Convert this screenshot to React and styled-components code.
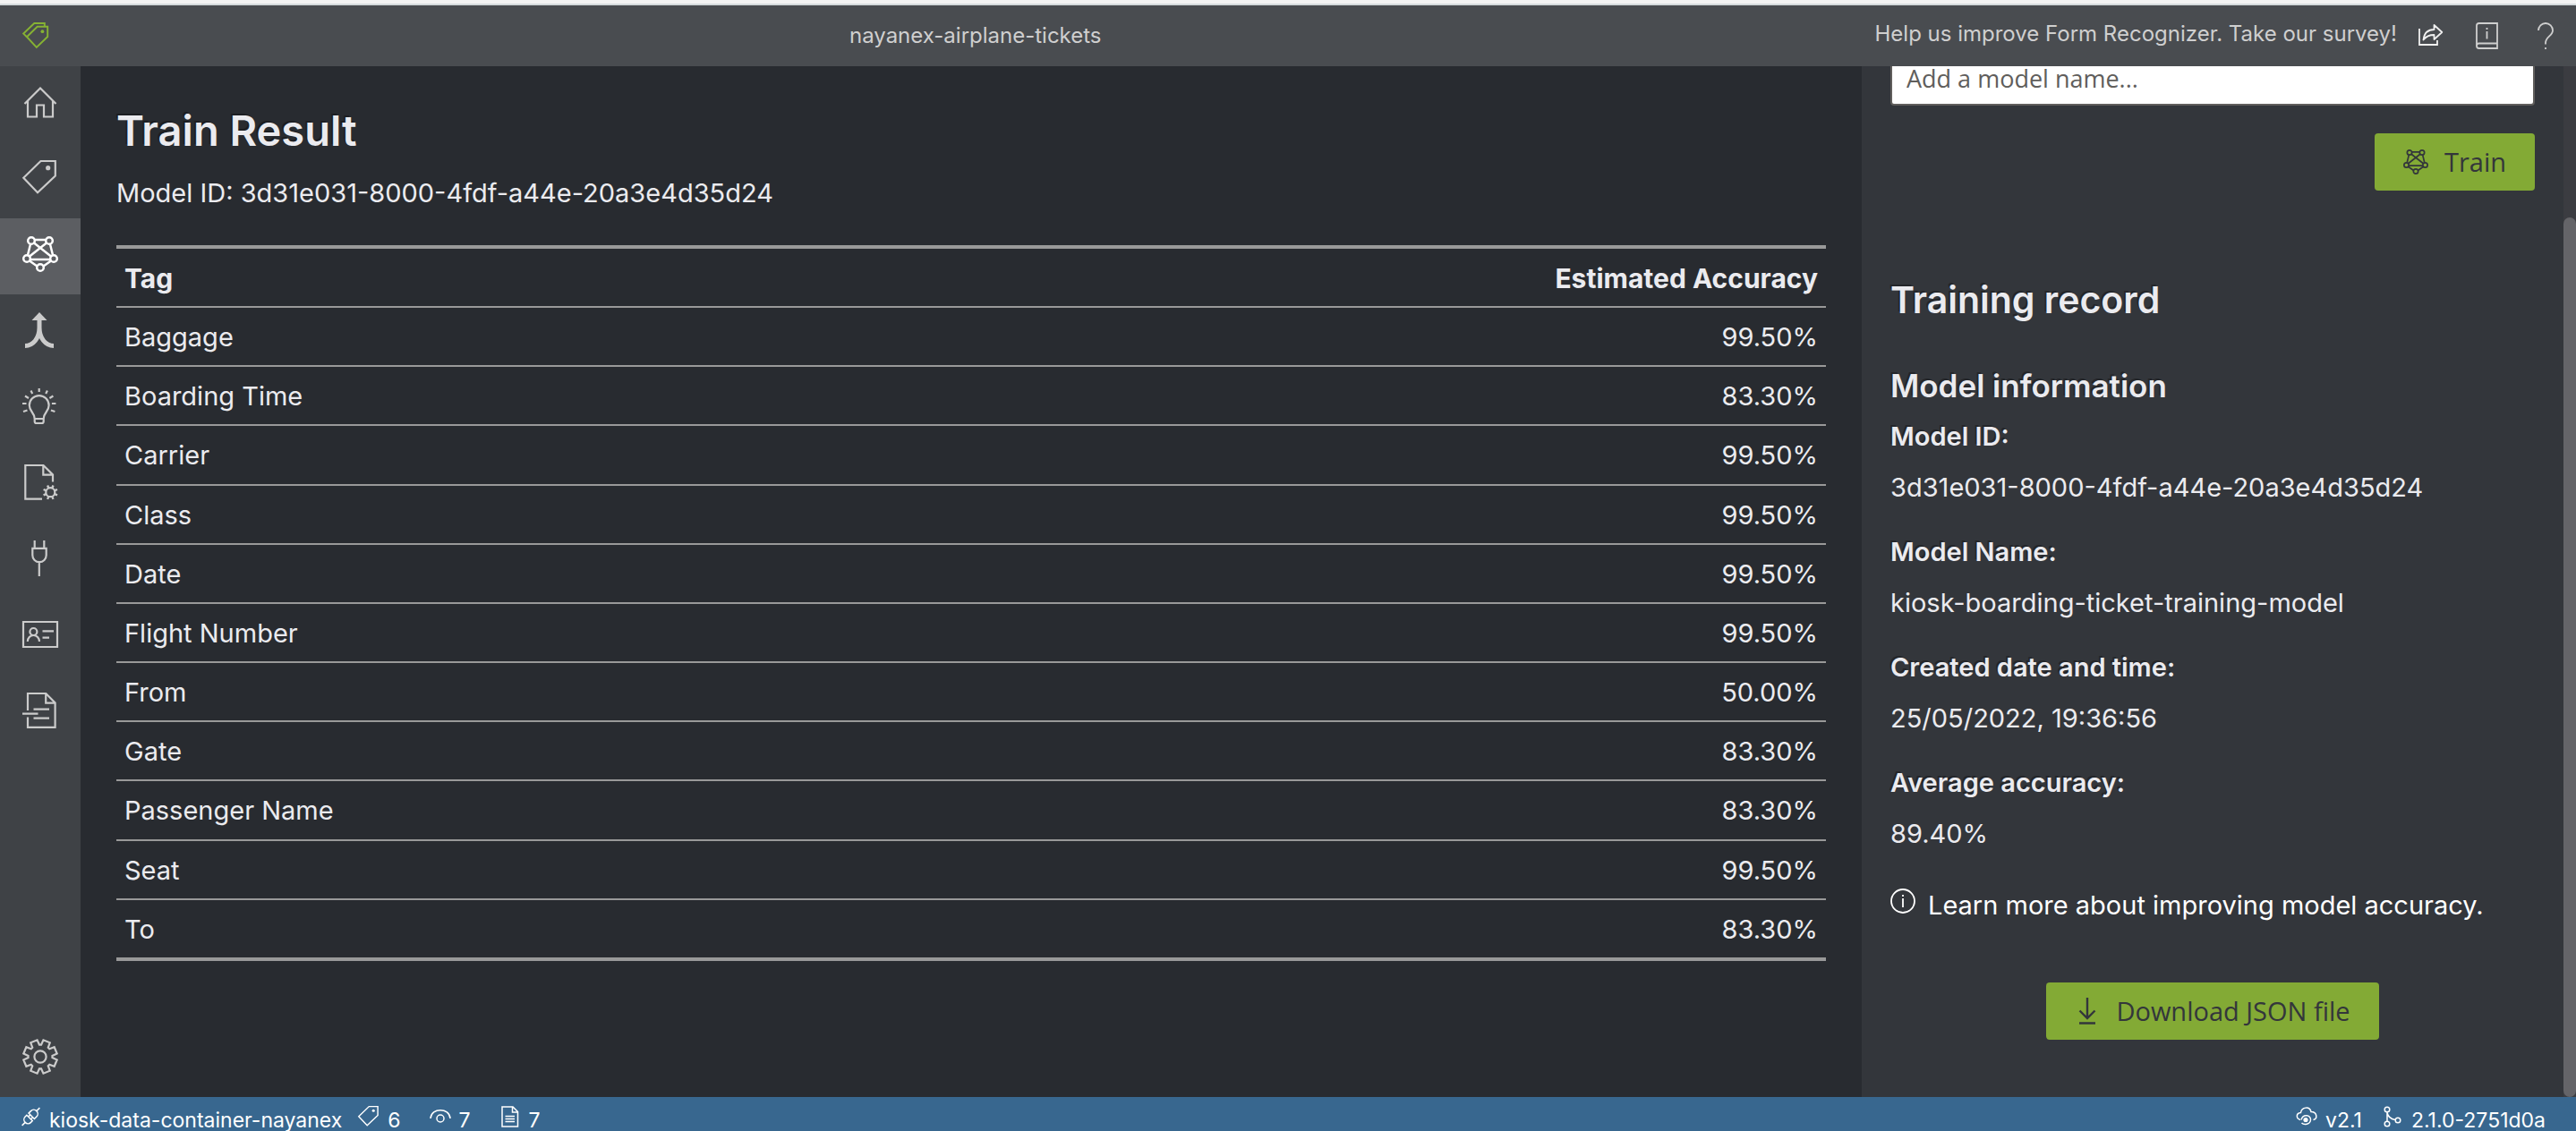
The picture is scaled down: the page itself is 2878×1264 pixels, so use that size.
import React from "react";
import styled, { createGlobalStyle } from "styled-components";

const ui = `Inter, "Liberation Sans", sans-serif`;
const control = `"Open Sans", "Noto Sans", sans-serif`;

const GlobalStyle = createGlobalStyle`
  *, *::before, *::after { box-sizing: border-box; }
  html, body, #root { height: 100%; }
  body {
    margin: 0;
    background: #282b30;
    color: #ebebef;
    font-family: ${ui};
    font-size: 29px;
    line-height: 48px;
    overflow: hidden;
  }
  h1, h2, h3, p, dl, dd { margin: 0; }
`;

/* ---------- layout ---------- */

const Shell = styled.div`
  display: flex;
  flex-direction: column;
  height: 100vh;
  border-top: 4px solid #f3f3f3;
`;

const Header = styled.header`
  display: flex;
  align-items: center;
  flex: none;
  height: 70px;
  padding: 0 20px 0 25px;
  border-top: 2px solid #d5dadc;
  background: #494c50;
  color: #cfcfcf;
  font-size: 24px;
  line-height: 32px;
`;

const ProjectName = styled.div`
  flex: 1;
  padding-left: 30px;
  text-align: center;
`;

const HeaderLink = styled.a`
  padding-bottom: 4px;
  color: inherit;
  text-decoration: none;
`;

const HeaderActions = styled.div`
  display: flex;
  align-items: center;
  gap: 34px;
  margin-left: 22px;
`;

const IconButton = styled.button`
  display: block;
  padding: 0;
  border: 0;
  background: none;
  color: ${(p) => (p.$bright ? "#f0f0f0" : "#cfcfcf")};
`;

const Body = styled.div`
  display: flex;
  flex: 1;
  min-height: 0;
`;

const Sidebar = styled.nav`
  display: flex;
  flex-direction: column;
  flex: none;
  width: 90px;
  background: #3f4246;
`;

const Spacer = styled.div`
  flex: 1;
`;

const NavLink = styled.a`
  display: flex;
  justify-content: center;
  height: 85px;
  padding-top: 20px;
  background: ${(p) => (p.$active ? "#5c5e62" : "transparent")};
  color: ${(p) => (p.$active ? "#ffffff" : "#cbcbcb")};
`;

const Main = styled.main`
  flex: 1;
  min-width: 0;
  padding: 42px 40px 0;
`;

const PageTitle = styled.h1`
  font-size: 47px;
  font-weight: 600;
  line-height: 60px;
  text-shadow: -2px -2px 0 rgba(0, 0, 0, 0.3);
`;

const ModelLine = styled.p`
  margin: 16px 0 34px;
`;

const Table = styled.table`
  width: 100%;
  height: 800px;
  border-collapse: collapse;
  border-top: 4px solid #999;
  border-bottom: 4px solid #999;
`;

const Row = styled.tr`
  border-bottom: 2px solid #999;
  &:last-child { border-bottom: ${(p) => (p.$head ? "2px solid #999" : "0")}; }
`;

const HeadCell = styled.th`
  padding: 9px 9px 7px;
  font-size: 30px;
  font-weight: 700;
  text-align: ${(p) => (p.$end ? "right" : "left")};
`;

const Cell = styled.td`
  padding: 9px 9px 7px;
  text-align: ${(p) => (p.$end ? "right" : "left")};
`;

const SidePanel = styled.aside`
  display: flex;
  flex: none;
  width: 798px;
  background: #33363b;
`;

/* Scrolled to its end: overflow leaves at the top. */
const PanelContent = styled.div`
  display: flex;
  flex-direction: column;
  justify-content: flex-end;
  flex: 1;
  min-width: 0;
  overflow: hidden;
  padding: 0 32px 64px;
`;

const ScrollTrack = styled.div`
  display: flex;
  flex-direction: column;
  justify-content: flex-end;
  width: 14px;
  background: #3b3c41;
`;

const ScrollThumb = styled.div`
  height: calc(100% - 169px);
  border-radius: 7px;
  background: #646468;
`;

const ModelNameInput = styled.input`
  flex: none;
  width: 100%;
  height: 64px;
  padding: 2px 16px 0;
  border: 2px solid #605e5c;
  border-radius: 4px;
  background: #fff;
  color: #323130;
  font-family: ${control};
  font-size: 27px;
  &::placeholder { color: #605e5c; opacity: 1; }
`;

const GreenButton = styled.button`
  display: flex;
  align-items: center;
  flex: none;
  gap: 18px;
  align-self: ${(p) => p.$align};
  height: 64px;
  padding: 0 32px;
  border: 0;
  border-radius: 4px;
  background: #83aa35;
  color: #33363b;
  font-family: ${control};
  font-size: 29px;
  line-height: 40px;
`;

const TrainButton = styled(GreenButton)`
  margin-top: 31px;
`;

const DownloadButton = styled(GreenButton)`
  margin-top: 62px;
`;

const PanelTitle = styled.h2`
  margin-top: 96px;
  font-size: 41px;
  font-weight: 600;
  line-height: 52px;
  text-shadow: -2px -2px 0 rgba(0, 0, 0, 0.3);
`;

const SectionTitle = styled.h3`
  margin: 48px 0 11px;
  font-size: 35px;
  font-weight: 600;
  line-height: 44px;
  text-shadow: -2px -2px 0 rgba(0, 0, 0, 0.3);
`;

const Facts = styled.dl`
  display: grid;
  gap: 24px;
`;

const Fact = styled.div`
  display: grid;
  gap: 9px;
`;

const FactLabel = styled.dt`
  font-weight: 600;
  text-shadow: -2px -2px 0 rgba(0, 0, 0, 0.3);
`;

const LearnMore = styled.a`
  display: flex;
  gap: 14px;
  margin-top: 32px;
  color: #fff;
  text-decoration: none;
  white-space: nowrap;
`;

const LearnIcon = styled.span`
  display: flex;
  padding-top: 5px;
`;

const StatusBar = styled.footer`
  display: flex;
  justify-content: space-between;
  flex: none;
  height: 38px;
  padding: 10px 34px 0 22px;
  background: #38678f;
  color: #fff;
  font-size: 23px;
  line-height: 32px;
`;

const StatusGroup = styled.div`
  display: flex;
  gap: ${(p) => p.$gap};
`;

const StatusItem = styled.div`
  display: flex;
  gap: 9px;
`;

/* ---------- icons ---------- */

const Glyph = styled.svg`
  display: block;
  flex: none;
  overflow: visible;
`;

function Icon({ size = 40, box = 40, stroke = 2.2, children }) {
  return (
    <Glyph
      width={size}
      height={size}
      viewBox={`0 0 ${box} ${box}`}
      fill="none"
      stroke="currentColor"
      strokeWidth={stroke}
      aria-hidden="true"
    >
      {children}
    </Glyph>
  );
}

const LogoIcon = () => (
  <Icon size={30} box={30} stroke={1.9}>
    <g stroke="#86b233">
      <path d="M5 16.2 16.7 4.7H28.2V16L15.8 28Z" />
      <path d="M5 16.2 1.2 12.6 13.3 1H24.8V4.7" />
      <circle cx="22.4" cy="10.2" r="1.9" fill="#86b233" stroke="none" />
    </g>
  </Icon>
);

const HomeIcon = () => (
  <Icon>
    <path d="M2.5 22 20 4.5 37.5 22M6 18.5V36.5H16V23.5H24V36.5H34V18.5" />
  </Icon>
);

const TagIcon = ({ size, stroke = 2.2 }) => (
  <Icon size={size} stroke={stroke}>
    <path d="M1.3 19.7 20.5 1H36.8V17.5L17 36.2Z" />
    <circle cx="28.7" cy="8.7" r="2.6" fill="currentColor" stroke="none" />
  </Icon>
);

const ModelIcon = ({ size, stroke = 2.5 }) => (
  <Icon size={size} stroke={stroke}>
    <circle cx="10" cy="5" r="3.8" />
    <circle cx="30" cy="5" r="3.8" />
    <circle cx="5" cy="25" r="3.8" />
    <circle cx="35" cy="25" r="3.8" />
    <circle cx="20" cy="35" r="3.8" />
    <path d="M14 4H26M9 9 6 21M31 9 34 21M13 7.5 32 22.5M27 7.5 8 22.5M9 26H31M8 27.5 16.5 33.5M32 27.5 23.5 33.5" />
  </Icon>
);

const MergeIcon = () => (
  <Icon stroke={5}>
    <path d="M19 5V17C19 29 12 37.5 3 37.5M19 17C19 29 26 37.5 35 37.5" />
    <path d="M19 0 27.5 9H10.5Z" fill="currentColor" stroke="none" />
  </Icon>
);

const BulbIcon = () => (
  <Icon>
    <path d="M13.7 34C13.7 27 7.8 26 7.8 19a10.9 10.9 0 0 1 21.8 0C29.6 26 23.7 27 23.7 34V37Q23.7 39 21.7 39H15.7Q13.7 39 13.7 37ZM13.7 34H23.7" />
    <path d="M18.7 0V4M9.5 2.5 11.2 6M27.9 2.5 26.2 6M3 8.5 7 11M34.4 8.5 30.4 11M0 17H4.5M37.4 17H32.9M1 26 5.5 24.5M36.4 26 31.9 24.5" />
  </Icon>
);

const DocGearIcon = () => (
  <Icon>
    <path d="M22 38.7H3.3V1H23.5L34 11.5V19.5M23.3 1V11.7H34" />
    <circle cx="31.3" cy="31.2" r="5" />
    <path
      strokeWidth="2.4"
      d="M36.2 33.2 39 34.4M33.3 36.1 34.5 38.9M29.3 36.1 28.1 38.9M26.4 33.2 23.6 34.4M26.4 29.2 23.6 28M29.3 26.3 28.1 23.5M33.3 26.3 34.5 23.5M36.2 29.2 39 28"
    />
  </Icon>
);

const PlugIcon = () => (
  <Icon>
    <path d="M13.7 0V8M24.3 0V8M11.3 8.8H26.7V16.5a7.7 7.7 0 0 1-15.4 0ZM18.8 24V40" />
  </Icon>
);

const CardIcon = () => (
  <Icon>
    <path d="M1 6H39V34H1Z" />
    <circle cx="12.4" cy="17" r="4" />
    <path d="M5.8 28a6.6 7 0 0 1 13.2 0M22.5 16.3H35M22.5 23.7H30" />
  </Icon>
);

const DocCopyIcon = () => (
  <Icon>
    <path d="M6 20V1H26.3L36.6 11.5V38.8H6V27.5M26.2 1V11.7H36.6M0 23.7H17.5M12.5 18.7H30M12.5 28.7H30" />
  </Icon>
);

const gearPath = (() => {
  const at = (radius, degrees) => {
    const a = (degrees * Math.PI) / 180;
    return `${(20 + radius * Math.cos(a)).toFixed(2)} ${(20 + radius * Math.sin(a)).toFixed(2)}`;
  };
  const points = [];
  for (let i = 0; i < 8; i += 1) {
    const mid = 22.5 + i * 45;
    points.push(at(13.5, mid - 18), at(19, mid - 12), at(19, mid + 12), at(13.5, mid + 18));
  }
  return `M${points.join("L")}Z`;
})();

const GearIcon = () => (
  <Icon>
    <path d={gearPath} />
    <circle cx="20" cy="20" r="6.6" />
  </Icon>
);

const ShareIcon = () => (
  <Icon size={30} box={30} stroke={1.8}>
    <path d="M3 7V25H23V20" />
    <path strokeLinejoin="round" d="M7.5 19.5C8.5 11.5 13 8 19.5 8V3L28.3 11 19.5 19V14C14 14 10.5 15.5 7.5 19.5Z" />
  </Icon>
);

const BookIcon = () => (
  <Icon size={30} box={30} stroke={1.8}>
    <path d="M3 26V3.5Q3 1 5.5 1H26V29H5.5Q3 29 3 26.3Q3 23.5 5.5 23.5H26" />
    <path d="M14.5 10V18.5M14.5 6V8" />
  </Icon>
);

const HelpIcon = () => (
  <Icon size={30} box={30} stroke={1.8}>
    <path d="M8 9a8 8 0 0 1 16 0C24 15 16 16 16 23V24.5M16 28V30" />
  </Icon>
);

const InfoIcon = () => (
  <Icon size={28} box={28} stroke={1.8}>
    <circle cx="14" cy="14" r="13" />
    <path d="M14 11V21M14 7V9" />
  </Icon>
);

const DownloadIcon = () => (
  <Icon size={28} box={28} stroke={2.4}>
    <path d="M14 -1V22M5.5 13.5 14 22 22.5 13.5M5 27.5H23" />
  </Icon>
);

const ConnectIcon = () => (
  <Icon size={24} box={24} stroke={1.5}>
    <g transform="rotate(45 12.5 12)">
      <path d="M12.5-2V3M8 11V7.5a4.5 4.5 0 0 1 9 0V11ZM8 14V16.5a4.5 4.5 0 0 0 9 0V14ZM12.5 21V26M10.5 11V14M14.5 11V14" />
    </g>
  </Icon>
);

const EyeIcon = () => (
  <Icon size={24} box={24} stroke={1.5}>
    <path d="M1 14C2 1.5 22 1.5 23 14" />
    <circle cx="12" cy="14" r="4" />
  </Icon>
);

const FileIcon = () => (
  <Icon size={24} box={24} stroke={1.5}>
    <path d="M3 1H15L20.5 6.5V23H3ZM14.5 1V7H20.5M6.5 11.5H17M6.5 14.5H17M6.5 17.5H17" />
  </Icon>
);

const CloudIcon = () => (
  <Icon size={24} box={24} stroke={1.5}>
    <path d="M5 15.5C0 14 0 8 5.5 7.5 6.5 1 15.5 0 17 6.5 24 6.5 24.5 14.5 19.5 15.5" />
    <path d="M6 15.5C8 8.5 17 10 16.5 15.5 16 21 9 21.5 6.5 19" />
    <circle cx="11" cy="15.5" r="2.6" fill="currentColor" stroke="none" />
  </Icon>
);

const BranchIcon = () => (
  <Icon size={24} box={24} stroke={1.5}>
    <circle cx="6" cy="4" r="2.8" />
    <circle cx="6" cy="20" r="2.8" />
    <circle cx="18" cy="16" r="2.8" />
    <path d="M6 7V17M6 7.5C7 12.5 10 14.5 15 15.5" />
  </Icon>
);

/* ---------- content ---------- */

const MODEL_ID = "3d31e031-8000-4fdf-a44e-20a3e4d35d24";

const NAV = [
  { label: "Home", icon: HomeIcon },
  { label: "Tags editor", icon: TagIcon },
  { label: "Train", icon: ModelIcon, active: true },
  { label: "Model compose", icon: MergeIcon },
  { label: "Analyze", icon: BulbIcon },
  { label: "Project settings", icon: DocGearIcon },
  { label: "Connections", icon: PlugIcon },
  { label: "Prebuilt analyze", icon: CardIcon },
  { label: "Layout analyze", icon: DocCopyIcon },
];

const RESULTS = [
  ["Baggage", "99.50%"],
  ["Boarding Time", "83.30%"],
  ["Carrier", "99.50%"],
  ["Class", "99.50%"],
  ["Date", "99.50%"],
  ["Flight Number", "99.50%"],
  ["From", "50.00%"],
  ["Gate", "83.30%"],
  ["Passenger Name", "83.30%"],
  ["Seat", "99.50%"],
  ["To", "83.30%"],
];

const FACTS = [
  ["Model ID:", MODEL_ID],
  ["Model Name:", "kiosk-boarding-ticket-training-model"],
  ["Created date and time:", "25/05/2022, 19:36:56"],
  ["Average accuracy:", "89.40%"],
];

export default function App() {
  return (
    <Shell>
      <GlobalStyle />
      <Header>
        <LogoIcon />
        <ProjectName>nayanex-airplane-tickets</ProjectName>
        <HeaderLink href="#survey">Help us improve Form Recognizer. Take our survey!</HeaderLink>
        <HeaderActions>
          <IconButton type="button" aria-label="Share" $bright>
            <ShareIcon />
          </IconButton>
          <IconButton type="button" aria-label="Documentation">
            <BookIcon />
          </IconButton>
          <IconButton type="button" aria-label="Help">
            <HelpIcon />
          </IconButton>
        </HeaderActions>
      </Header>

      <Body>
        <Sidebar aria-label="Main">
          {NAV.map(({ label, icon: NavIcon, active }) => (
            <NavLink key={label} href="#" aria-label={label} $active={active}>
              <NavIcon />
            </NavLink>
          ))}
          <Spacer />
          <NavLink href="#" aria-label="Application settings">
            <GearIcon />
          </NavLink>
        </Sidebar>

        <Main>
          <PageTitle>Train Result</PageTitle>
          <ModelLine>Model ID: {MODEL_ID}</ModelLine>
          <Table>
            <thead>
              <Row $head>
                <HeadCell scope="col">Tag</HeadCell>
                <HeadCell scope="col" $end>Estimated Accuracy</HeadCell>
              </Row>
            </thead>
            <tbody>
              {RESULTS.map(([tag, accuracy]) => (
                <Row key={tag}>
                  <Cell>{tag}</Cell>
                  <Cell $end>{accuracy}</Cell>
                </Row>
              ))}
            </tbody>
          </Table>
        </Main>

        <SidePanel>
          <PanelContent>
            <ModelNameInput type="text" aria-label="Model name" placeholder="Add a model name..." />
            <TrainButton type="button" $align="flex-end">
              <ModelIcon size={28} stroke={2.4} />
              Train
            </TrainButton>
            <PanelTitle>Training record</PanelTitle>
            <SectionTitle>Model information</SectionTitle>
            <Facts>
              {FACTS.map(([label, value]) => (
                <Fact key={label}>
                  <FactLabel>{label}</FactLabel>
                  <dd>{value}</dd>
                </Fact>
              ))}
            </Facts>
            <LearnMore href="#accuracy">
              <LearnIcon>
                <InfoIcon />
              </LearnIcon>
              Learn more about improving model accuracy.
            </LearnMore>
            <DownloadButton type="button" $align="center">
              <DownloadIcon />
              Download JSON file
            </DownloadButton>
          </PanelContent>
          <ScrollTrack aria-hidden="true">
            <ScrollThumb />
          </ScrollTrack>
        </SidePanel>
      </Body>

      <StatusBar>
        <StatusGroup $gap="18px">
          <StatusItem>
            <ConnectIcon />
            kiosk-data-container-nayanex
          </StatusItem>
          <StatusGroup $gap="32px">
            <StatusItem>
              <TagIcon size={24} stroke={2.4} />6
            </StatusItem>
            <StatusItem>
              <EyeIcon />7
            </StatusItem>
            <StatusItem>
              <FileIcon />7
            </StatusItem>
          </StatusGroup>
        </StatusGroup>
        <StatusGroup $gap="22px">
          <StatusItem>
            <CloudIcon />
            v2.1
          </StatusItem>
          <StatusItem>
            <BranchIcon />
            2.1.0-2751d0a
          </StatusItem>
        </StatusGroup>
      </StatusBar>
    </Shell>
  );
}
